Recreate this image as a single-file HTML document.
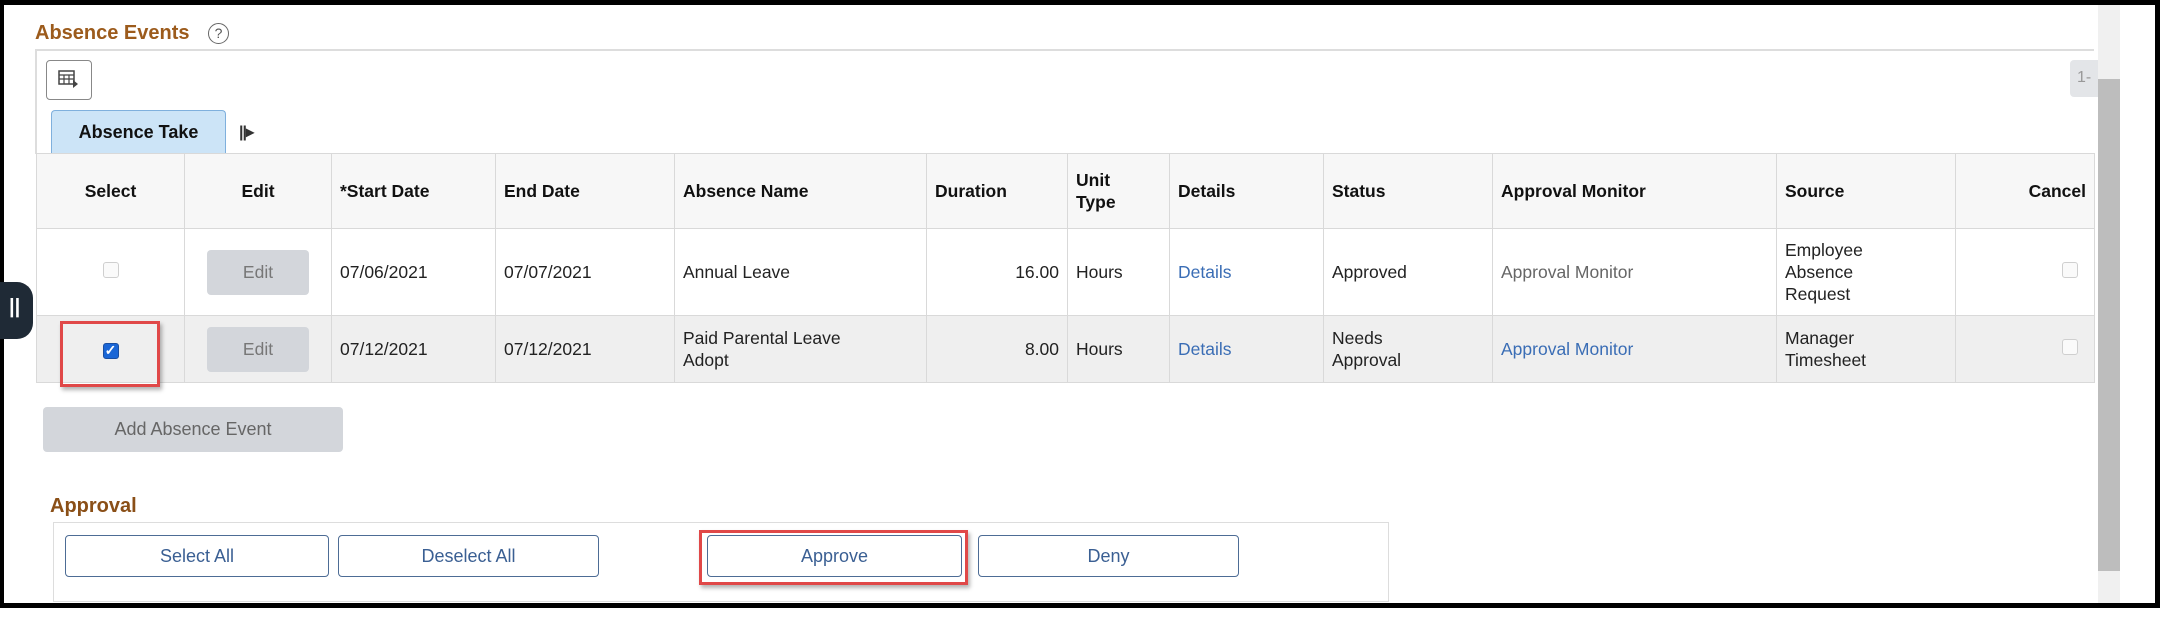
<!DOCTYPE html>
<html><head><meta charset="utf-8"><style>
*{box-sizing:border-box;margin:0;padding:0}
body{width:2171px;height:637px;background:#fff;position:relative;overflow:hidden;font-family:"Liberation Sans",Arial,sans-serif;color:#222}
.a{position:absolute}
table{position:absolute;left:36px;top:153px;width:2058px;border-collapse:collapse;table-layout:fixed;font-size:17.5px}
td,th{border:1.5px solid #d9d9d9;padding:0 8px;vertical-align:middle;text-align:left;line-height:22px}
th{background:#f7f7f7;font-weight:bold;color:#111;height:75px}
tr.r1 td{height:87px;background:#fff}
tr.r2 td{height:67px;background:#efefef}
.c{text-align:center}.r{text-align:right}
.lnk{color:#3a6db5}
.ebtn{display:inline-block;width:102px;height:45px;line-height:45px;background:#d3d6db;border-radius:4px;color:#777;text-align:center}
.cb{display:inline-block;width:16px;height:16px;border:1.5px solid #cfcfcf;border-radius:3px;background:#fafafa}
.btn{position:absolute;top:535px;height:42px;border:1.5px solid #4d6c95;border-radius:4px;background:#fff;color:#3a5f93;font-size:18px;text-align:center;line-height:40px}
</style></head><body>
<div class="a" style="left:0;top:0;width:2160px;height:5px;background:#000"></div>
<div class="a" style="left:0;top:0;width:4px;height:607px;background:#000"></div>
<div class="a" style="left:2155px;top:0;width:5px;height:607px;background:#000"></div>
<div class="a" style="left:0;top:603px;width:2160px;height:5px;background:#000"></div>
<div class="a" style="left:2098px;top:5px;width:22px;height:598px;background:#f0f0f0"></div>
<div class="a" style="left:2098px;top:79px;width:22px;height:492px;background:#bdbdbd"></div>

<div class="a" style="left:35px;top:22px;font-size:20px;font-weight:bold;color:#9c5b1c">Absence Events</div>
<div class="a" style="left:208px;top:23px;width:21px;height:21px;border:1.5px solid #666;border-radius:50%;font-size:14px;color:#555;text-align:center;line-height:18px">?</div>
<div class="a" style="left:35px;top:49px;width:2059px;height:1.5px;background:#ddd"></div>
<div class="a" style="left:35px;top:49px;width:1.5px;height:105px;background:#ddd"></div>
<div class="a" style="left:46px;top:60px;width:46px;height:40px;border:1.5px solid #888;border-radius:4px;background:#fff">
<svg width="22" height="20" viewBox="0 0 22 20" style="position:absolute;left:11px;top:9px"><rect x="1" y="1" width="15" height="13" fill="none" stroke="#444" stroke-width="1.5"/><path d="M1 5H16M1 9H16M6 5V14M11 5V14" stroke="#444" stroke-width="1.2"/><path d="M15 10L20 14L15 18Z" fill="#444"/></svg></div>
<div class="a" style="left:2070px;top:60px;width:28px;height:37px;background:#e3e5e8;border-radius:4px 0 0 4px;color:#999;font-size:16px;padding:9px 0 0 7px">1-</div>
<div class="a" style="left:51px;top:110px;width:175px;height:44px;background:#cce4f7;border:1.5px solid #7fb0dd;border-bottom:none;border-radius:4px 4px 0 0;font-size:18px;font-weight:bold;text-align:center;line-height:42px;color:#111">Absence Take</div>
<div class="a" style="left:239px;top:122px;font-size:16px;font-weight:bold;color:#333;letter-spacing:-1px">||&#9656;</div>

<table>
<colgroup><col style="width:148px"><col style="width:147px"><col style="width:164px"><col style="width:179px"><col style="width:252px"><col style="width:141px"><col style="width:102px"><col style="width:154px"><col style="width:169px"><col style="width:284px"><col style="width:179px"><col style="width:139px"></colgroup>
<tr><th class="c">Select</th><th class="c">Edit</th><th>*Start Date</th><th>End Date</th><th>Absence Name</th><th>Duration</th><th>Unit<br>Type</th><th>Details</th><th>Status</th><th>Approval Monitor</th><th>Source</th><th class="r">Cancel</th></tr>
<tr class="r1"><td class="c"><span class="cb"></span></td><td class="c"><span class="ebtn">Edit</span></td><td>07/06/2021</td><td>07/07/2021</td><td>Annual Leave</td><td class="r">16.00</td><td>Hours</td><td class="lnk">Details</td><td>Approved</td><td style="color:#666">Approval Monitor</td><td>Employee<br>Absence<br>Request</td><td class="r" style="padding-right:16px"><span class="cb"></span></td></tr>
<tr class="r2"><td class="c"><span class="cb" style="background:#1a66d6;border-color:#1a4ea0;color:#fff;font-size:14px;line-height:13px;font-weight:bold">&#10003;</span></td><td class="c"><span class="ebtn">Edit</span></td><td>07/12/2021</td><td>07/12/2021</td><td>Paid Parental Leave<br>Adopt</td><td class="r">8.00</td><td>Hours</td><td class="lnk">Details</td><td>Needs<br>Approval</td><td class="lnk">Approval Monitor</td><td>Manager<br>Timesheet</td><td class="r" style="padding-right:16px"><span class="cb"></span></td></tr>
</table>
<div class="a" style="left:60px;top:321px;width:100px;height:66px;border:3px solid #e04848;box-shadow:2px 3px 4px rgba(0,0,0,.3)"></div>
<div class="a" style="left:0;top:282px;width:33px;height:57px;background:#1f2a36;border-radius:0 16px 16px 0;color:#fff;font-size:20px;font-weight:bold;padding:14px 0 0 9px">||</div>

<div class="a" style="left:43px;top:407px;width:300px;height:45px;background:#d3d6db;border-radius:4px;color:#666;font-size:18px;text-align:center;line-height:45px">Add Absence Event</div>
<div class="a" style="left:50px;top:495px;font-size:20px;font-weight:bold;color:#8a4f17">Approval</div>
<div class="a" style="left:53px;top:522px;width:1336px;height:80px;border:1.5px solid #ddd"></div>
<div class="btn" style="left:65px;width:264px">Select All</div>
<div class="btn" style="left:338px;width:261px">Deselect All</div>
<div class="btn" style="left:707px;width:255px">Approve</div>
<div class="btn" style="left:978px;width:261px">Deny</div>
<div class="a" style="left:699px;top:530px;width:269px;height:55px;border:3px solid #e04848;box-shadow:2px 3px 4px rgba(0,0,0,.3)"></div>
</body></html>
